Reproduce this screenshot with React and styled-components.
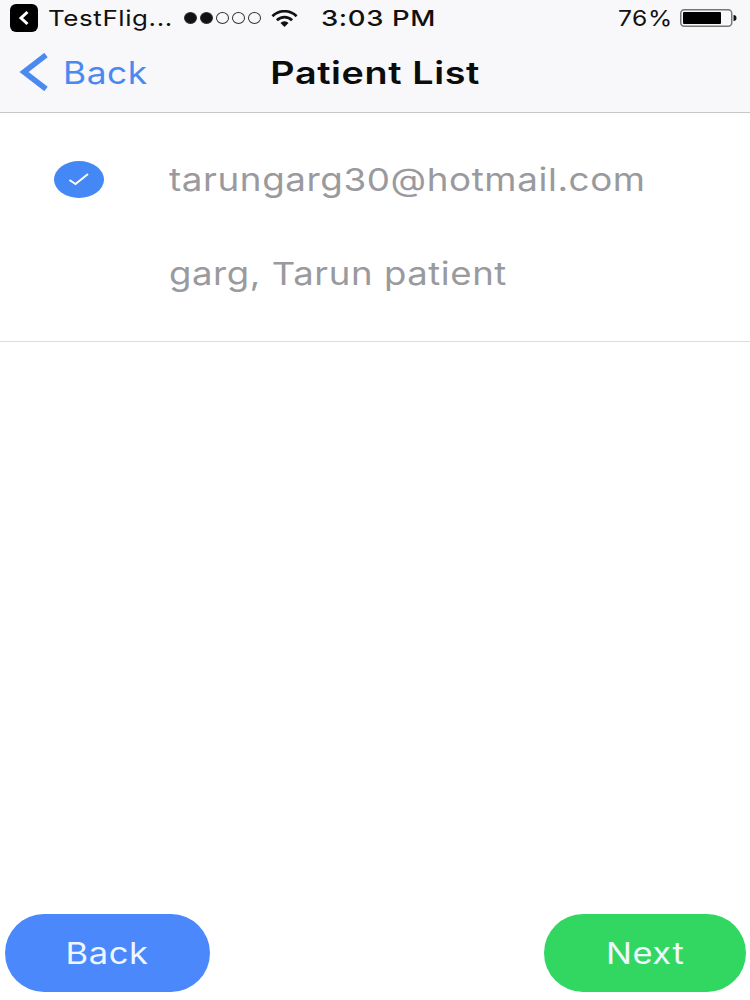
import React from "react";
import styled, { createGlobalStyle } from "styled-components";

const GlobalStyle = createGlobalStyle`
  html, body {
    margin: 0;
    padding: 0;
    background: #fff;
  }
  * {
    box-sizing: border-box;
  }
`;

const Screen = styled.div`
  width: 750px;
  height: 1000px;
  display: flex;
  flex-direction: column;
  overflow: hidden;
  background: #fff;
  font-family: Inter, "Liberation Sans", sans-serif;
`;

// the screenshot is stretched sideways, so the type is too
const Wide = styled.span`
  display: inline-block;
  white-space: nowrap;
  letter-spacing: 0.5px;
  transform: scaleX(${(p) => p.$scale});
  transform-origin: ${(p) => p.$origin || "left"} center;
`;

const Header = styled.header`
  height: 113px;
  flex: none;
  background: #f8f8fa;
  border-bottom: 1.5px solid #c6c6c8;
`;

const StatusBar = styled.div`
  height: 36px;
  padding: 0 13px 0 10px;
  display: flex;
  align-items: center;
  color: #111;
  font-size: 22px;
`;

const AppBadge = styled.div`
  width: 28px;
  height: 28px;
  border-radius: 6px;
  background: #000;
  display: flex;
  align-items: center;
  justify-content: center;
  margin-right: 10px;
`;

const AppName = styled.div`
  width: 136px;
`;

const Signal = styled.div`
  display: flex;
  gap: 3px;
  margin-right: 10px;
`;

const Dot = styled.span`
  width: 13px;
  height: 12px;
  border-radius: 50%;
  border: 1px solid #333;
  background: ${(p) => (p.$on ? "#111" : "transparent")};
`;

const Clock = styled.div`
  margin-left: 23px;
  font-weight: 500;
`;

const StatusRight = styled.div`
  margin-left: auto;
  display: flex;
  align-items: center;
`;

const Percent = styled.div`
  width: 62px;
`;

const NavBar = styled.nav`
  height: 76px;
  display: grid;
  grid-template-columns: 1fr auto 1fr;
  align-items: center;
  padding-bottom: 4px;
`;

const NavBack = styled.div`
  display: flex;
  align-items: center;
  padding-left: 18px;
  gap: 15px;
  color: #4a8af0;
  font-size: 31px;
`;

const Title = styled.h1`
  margin: 0;
  font-size: 31px;
  font-weight: 600;
  color: #0c0c0c;
`;

const PatientRow = styled.section`
  height: 229px;
  flex: none;
  border-bottom: 1.5px solid #dcdcde;
  display: grid;
  grid-template-columns: 169px 1fr;
  grid-template-rows: 1fr 1fr;
  padding: 19px 0 20px;
  color: #9a9a9e;
  font-size: 31.5px;
`;

const CheckCell = styled.div`
  display: flex;
  align-items: center;
  padding-left: 54px;
`;

const Check = styled.div`
  width: 50px;
  height: 37px;
  border-radius: 50%;
  background: #4488f5;
  display: flex;
  align-items: center;
  justify-content: center;
`;

const Line = styled.div`
  display: flex;
  align-items: center;
`;

const Spacer = styled.div`
  flex: 1;
`;

const Footer = styled.footer`
  flex: none;
  display: flex;
  justify-content: space-between;
  padding: 0 4px 8px 5px;
`;

const PillButton = styled.button`
  width: ${(p) => p.$width}px;
  height: 78px;
  border: 0;
  border-radius: 39px;
  background: ${(p) => p.$color};
  color: #eef6ff;
  font-family: inherit;
  font-size: 30px;
  padding: 0;
`;

const App = () => {
  return (
    <Screen>
      <GlobalStyle />
      <Header>
        <StatusBar>
          <AppBadge>
            <svg width="12" height="16" viewBox="0 0 12 16">
              <path d="M9.5 2 L3 8 L9.5 14" fill="none" stroke="#fff" strokeWidth="3" />
            </svg>
          </AppBadge>
          <AppName>
            <Wide $scale={1.18}>TestFlig...</Wide>
          </AppName>
          <Signal>
            <Dot $on />
            <Dot $on />
            <Dot />
            <Dot />
            <Dot />
          </Signal>
          <svg width="27" height="17" viewBox="0 0 30 19">
            <path d="M1.5 7 A19 19 0 0 1 28.5 7" fill="none" stroke="#111" strokeWidth="3" />
            <path d="M6.5 11.5 A12 12 0 0 1 23.5 11.5" fill="none" stroke="#111" strokeWidth="3" />
            <path d="M15 19 L10.5 14.5 A6.5 6.5 0 0 1 19.5 14.5 Z" fill="#111" />
          </svg>
          <Clock>
            <Wide $scale={1.25}>3:03 PM</Wide>
          </Clock>
          <StatusRight>
            <Percent>
              <Wide $scale={1.12}>76%</Wide>
            </Percent>
            <svg width="57" height="20" viewBox="0 0 57 20">
              <rect x="0.75" y="1.75" width="51" height="16.5" rx="3.5" fill="none" stroke="#777" strokeWidth="1.5" />
              <rect x="3" y="4" width="38" height="12" rx="1" fill="#000" />
              <path d="M53.5 7 A3 3 0 0 1 53.5 13 Z" fill="#111" />
            </svg>
          </StatusRight>
        </StatusBar>
        <NavBar>
          <NavBack>
            <svg width="30" height="38" viewBox="0 0 30 38">
              <path d="M28 2 L6 19 L28 36" fill="none" stroke="#4a8af0" strokeWidth="5.5" />
            </svg>
            <Wide $scale={1.14}>Back</Wide>
          </NavBack>
          <Title>
            <Wide $scale={1.217} $origin="center">Patient List</Wide>
          </Title>
        </NavBar>
      </Header>
      <PatientRow>
        <CheckCell>
          <Check>
            <svg width="24" height="16" viewBox="0 0 24 16">
              <path d="M2.5 9 L8.5 13 L21 3" fill="none" stroke="#fff" strokeWidth="2" />
            </svg>
          </Check>
        </CheckCell>
        <Line>
          <Wide $scale={1.168}>tarungarg30@hotmail.com</Wide>
        </Line>
        <div />
        <Line>
          <Wide $scale={1.16}>garg, Tarun patient</Wide>
        </Line>
      </PatientRow>
      <Spacer />
      <Footer>
        <PillButton $width={205} $color="#4a88fb">
          <Wide $scale={1.15} $origin="center">Back</Wide>
        </PillButton>
        <PillButton $width={202} $color="#32d762">
          <Wide $scale={1.15} $origin="center">Next</Wide>
        </PillButton>
      </Footer>
    </Screen>
  );
};

export default App;
